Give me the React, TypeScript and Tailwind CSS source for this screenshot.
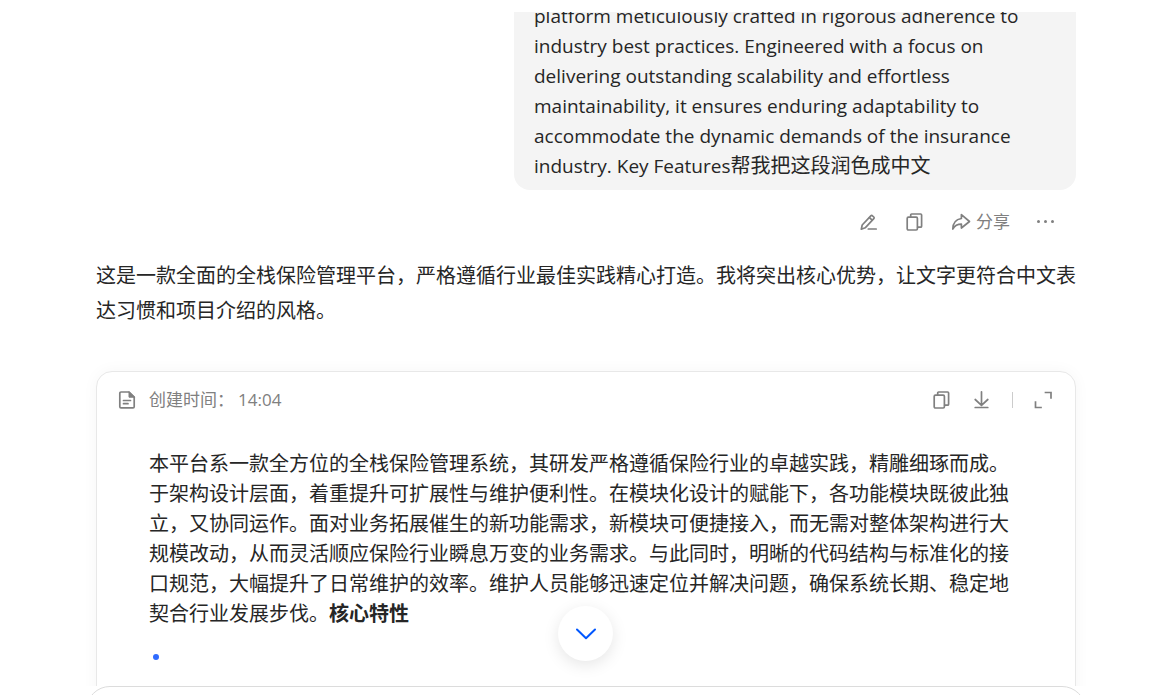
import type { ReactNode } from "react";

type IconProps = { children: ReactNode };

function Icon({ children }: IconProps) {
  return (
    <svg
      className="size-5 shrink-0"
      viewBox="0 0 20 20"
      fill="none"
      stroke="currentColor"
      strokeWidth="1.7"
      strokeLinecap="round"
      strokeLinejoin="round"
      aria-hidden="true"
    >
      {children}
    </svg>
  );
}

function EditIcon() {
  return (
    <Icon>
      <path d="M2.3 17.2 3.2 13 11.8 3.8a1.2 1.2 0 0 1 1.7 0l1.3 1.2a1.2 1.2 0 0 1 0 1.7L6.2 15.8 2.3 17.2Z" />
      <path d="m10.400 5.600 2.800 2.600M9.300 17h7.900" />
    </Icon>
  );
}

function CopyIcon() {
  return (
    <Icon>
      <rect x="2.200" y="5.200" width="10.200" height="12.800" rx="1.200" />
      <path d="M5.700 5V3c0-.6.4-1 1-1h8.900c.6 0 1 .4 1 1v11.200c0 .6-.4 1-1 1h-2.900" />
    </Icon>
  );
}

function ShareIcon() {
  return (
    <Icon>
      <path d="M10.400 2.600 18.500 9.500l-8.100 6.500v-3.800C6.800 12.200 4 13.200 1.800 17c.1-5.700 3.400-9.700 8.600-10.500V2.600Z" />
    </Icon>
  );
}

function MoreIcon() {
  return (
    <Icon>
      <g fill="currentColor" stroke="none">
        <circle cx="2.500" cy="9.500" r="1.500" />
        <circle cx="9.500" cy="9.500" r="1.500" />
        <circle cx="16.500" cy="9.500" r="1.500" />
      </g>
    </Icon>
  );
}

function DocumentIcon() {
  return (
    <Icon>
      <path d="M12 2H4c-.7 0-1.200.5-1.200 1.200v13.500c0 .7.500 1.200 1.200 1.200h12c.7 0 1.200-.5 1.200-1.200V7.200L12 2Z" />
      <path d="M12 2v5.200h5.200Z" fill="currentColor" strokeWidth="1" />
      <path d="M6.500 10.500h7M6.500 13.700h4.500" />
    </Icon>
  );
}

function DownloadIcon() {
  return (
    <Icon>
      <path d="M9.500 1.800v13M3.200 9.500l6.300 5.800 6.300-5.800M3.200 17.500h12.600" />
    </Icon>
  );
}

function ExpandIcon() {
  return (
    <Icon>
      <path d="M12.500 2.500h5.500v5.500M2.500 12v5.500h5.500" strokeLinecap="square" strokeLinejoin="miter" />
    </Icon>
  );
}

function MessageActions() {
  return (
    <div className="mr-5 flex h-16 items-center gap-[26px] text-[#808080]">
      <button type="button" aria-label="编辑">
        <EditIcon />
      </button>
      <button type="button" aria-label="复制">
        <CopyIcon />
      </button>
      <button type="button" className="flex items-center gap-[5px] text-[17px] leading-6">
        <ShareIcon />
        分享
      </button>
      <button type="button" aria-label="更多">
        <MoreIcon />
      </button>
    </div>
  );
}

function UserMessage() {
  return (
    <div className="-mt-[11px] flex flex-col items-end">
      <p className="w-[562px] max-w-full rounded-b-2xl bg-[#f4f4f4] px-5 pb-[9px] text-[19px]">
        platform meticulously crafted in rigorous adherence to industry best practices. Engineered
        with a focus on delivering outstanding scalability and effortless maintainability, it
        ensures enduring adaptability to accommodate the dynamic demands of the insurance industry.
        Key Features
        <span className="text-[20px]">帮我把这段润色成中文</span>
      </p>
      <MessageActions />
    </div>
  );
}

function DocumentCard() {
  return (
    <article className="mt-[43px] min-h-96 rounded-2xl border border-[#e8e8e8] bg-white shadow-[0_0_16px_rgba(0,0,0,0.04)]">
      <header className="flex h-14 items-center justify-between pr-[22px] pl-5 text-[#808080]">
        <div className="flex items-center gap-3 text-[17px]">
          <DocumentIcon />
          <p className="flex gap-1">
            <span>创建时间：</span>
            <time>14:04</time>
          </p>
        </div>
        <div className="flex items-center gap-5">
          <button type="button" aria-label="复制">
            <CopyIcon />
          </button>
          <button type="button" aria-label="下载">
            <DownloadIcon />
          </button>
          <span className="h-4 w-px bg-[#cccccc]" />
          <button type="button" aria-label="展开">
            <ExpandIcon />
          </button>
        </div>
      </header>
      <div className="px-[52px] pt-[21px]">
        <p>
          本平台系一款全方位的全栈保险管理系统，其研发严格遵循保险行业的卓越实践，精雕细琢而成。于架构设计层面，着重提升可扩展性与维护便利性。在模块化设计的赋能下，各功能模块既彼此独立，又协同运作。面对业务拓展催生的新功能需求，新模块可便捷接入，而无需对整体架构进行大规模改动，从而灵活顺应保险行业瞬息万变的业务需求。与此同时，明晰的代码结构与标准化的接口规范，大幅提升了日常维护的效率。维护人员能够迅速定位并解决问题，确保系统长期、稳定地契合行业发展步伐。
          <strong className="font-bold">核心特性</strong>
        </p>
        <ul className="mt-[25px] pl-1">
          <li className="size-1.5 rounded-full bg-[#2f6bff]" />
        </ul>
      </div>
    </article>
  );
}

export default function App() {
  return (
    <div className="relative flex h-screen flex-col overflow-hidden bg-white pt-3 font-['Open_Sans','Noto_Sans_CJK_SC',sans-serif] text-[20px] leading-[30px] text-[#262626]">
      <main className="min-h-0 flex-1 overflow-hidden pr-20 pl-24">
        <UserMessage />
        <p className="mt-1 leading-[35px]">
          这是一款全面的全栈保险管理平台，严格遵循行业最佳实践精心打造。我将突出核心优势，让文字更符合中文表达习惯和项目介绍的风格。
        </p>
        <DocumentCard />
      </main>
      <footer className="h-[9px] shrink-0 overflow-hidden pr-[70px] pl-[86px]">
        <div className="h-24 rounded-3xl border border-[#dcdcdc] bg-white" />
      </footer>
      <div className="pointer-events-none absolute inset-x-0 bottom-[34px] flex justify-center pl-[15px]">
        <button
          type="button"
          aria-label="滚动到底部"
          className="pointer-events-auto flex size-[55px] items-center justify-center rounded-full bg-white text-[#0057ff] shadow-[0_4px_16px_rgba(0,0,0,0.1)]"
        >
          <svg className="size-5" viewBox="0 0 20 20" fill="none" stroke="currentColor" strokeWidth="2" strokeLinecap="round" strokeLinejoin="round" aria-hidden="true">
            <path d="m1 5.500 9 8.700 9-8.700" />
          </svg>
        </button>
      </div>
    </div>
  );
}
